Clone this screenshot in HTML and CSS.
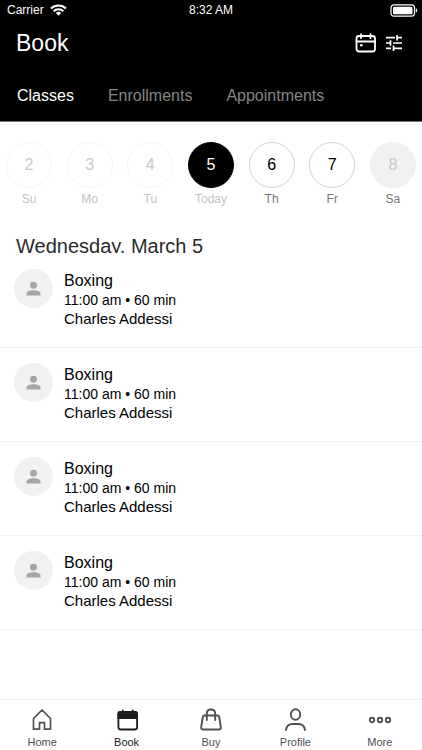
FILE: index.html
```html
<!DOCTYPE html>
<html lang="en">
<head>
<meta charset="utf-8">
<meta name="viewport" content="width=device-width, initial-scale=1">
<title>Book</title>
<link rel="stylesheet" href="styles.css">
</head>
<body>
<header class="header">
  <div class="status">
    <div class="carrier">Carrier
      <svg width="17" height="12" viewBox="0 0 17 12" fill="none" stroke="currentColor" stroke-width="2" aria-hidden="true"><path d="M1 4.500a10.800 10.800 0 0 1 15 0M3.600 7.200a7 7 0 0 1 9.800 0"/><path d="M8.500 11.700 5.900 9.100a3.700 3.700 0 0 1 5.200 0z" fill="currentColor" stroke="none"/></svg>
    </div>
    <div class="clock">8:32 AM</div>
    <div class="battery">
      <svg width="28" height="13" viewBox="0 0 28 13" aria-hidden="true"><rect x="1" y=".8" width="23.500" height="11.400" rx="3" fill="none" stroke="currentColor" stroke-width="1.200"/><rect x="3" y="2.700" width="19.500" height="7.600" rx="1" fill="currentColor"/><path d="M25.800 4.300c2 .7 2 3.700 0 4.400z" fill="currentColor"/></svg>
    </div>
  </div>
  <div class="titlebar">
    <h1>Book</h1>
    <div class="actions">
      <button type="button" aria-label="Calendar">
        <svg width="22" height="20" viewBox="0 0 22 20" fill="none" stroke="currentColor" stroke-width="1.800" stroke-linecap="round"><rect x="1.500" y="3" width="18.500" height="15.500" rx="2.500"/><path d="M1.500 8.500h18.500M6 1.200v4M15.500 1.200v4"/><circle cx="6.300" cy="12.300" r="1.300" fill="currentColor" stroke="none"/></svg>
      </button>
      <button type="button" aria-label="Filters">
        <svg width="18" height="18" viewBox="0 0 18 18" fill="none" stroke="currentColor" stroke-width="1.700"><path d="M1 3.700h9M12 3.700h5M12 1v5.400M1 9h4M8 9h9M5.500 6.300v5.400M1 14.300h5M8.500 14.300h8.500M8.500 11.600v5.400"/></svg>
      </button>
    </div>
  </div>
  <nav class="tabs">
    <a href="#classes" class="current">Classes</a>
    <a href="#enrollments">Enrollments</a>
    <a href="#appointments">Appointments</a>
  </nav>
</header>

<main class="main">
  <div class="week">
    <button type="button" class="day past"><span class="date">2</span><span class="name">Su</span></button>
    <button type="button" class="day past"><span class="date">3</span><span class="name">Mo</span></button>
    <button type="button" class="day past"><span class="date">4</span><span class="name">Tu</span></button>
    <button type="button" class="day today"><span class="date">5</span><span class="name">Today</span></button>
    <button type="button" class="day"><span class="date">6</span><span class="name">Th</span></button>
    <button type="button" class="day"><span class="date">7</span><span class="name">Fr</span></button>
    <button type="button" class="day closed"><span class="date">8</span><span class="name">Sa</span></button>
  </div>
  <h2>Wednesday, March 5</h2>
  <ul class="classes">
    <li>
      <span class="avatar"><svg width="15" height="15" viewBox="0 0 16 16" fill="currentColor" aria-hidden="true"><circle cx="8" cy="4.500" r="3.700"/><path d="M.5 15.500v-2c0-2.500 4-3.700 7.500-3.700s7.500 1.200 7.500 3.700v2z"/></svg></span>
      <div class="info"><h3>Boxing</h3><p class="time">11:00 am • 60 min</p><p class="teacher">Charles Addessi</p></div>
    </li>
    <li>
      <span class="avatar"><svg width="15" height="15" viewBox="0 0 16 16" fill="currentColor" aria-hidden="true"><circle cx="8" cy="4.500" r="3.700"/><path d="M.5 15.500v-2c0-2.500 4-3.700 7.500-3.700s7.500 1.200 7.500 3.700v2z"/></svg></span>
      <div class="info"><h3>Boxing</h3><p class="time">11:00 am • 60 min</p><p class="teacher">Charles Addessi</p></div>
    </li>
    <li>
      <span class="avatar"><svg width="15" height="15" viewBox="0 0 16 16" fill="currentColor" aria-hidden="true"><circle cx="8" cy="4.500" r="3.700"/><path d="M.5 15.500v-2c0-2.500 4-3.700 7.500-3.700s7.500 1.200 7.500 3.700v2z"/></svg></span>
      <div class="info"><h3>Boxing</h3><p class="time">11:00 am • 60 min</p><p class="teacher">Charles Addessi</p></div>
    </li>
    <li>
      <span class="avatar"><svg width="15" height="15" viewBox="0 0 16 16" fill="currentColor" aria-hidden="true"><circle cx="8" cy="4.500" r="3.700"/><path d="M.5 15.500v-2c0-2.500 4-3.700 7.500-3.700s7.500 1.200 7.500 3.700v2z"/></svg></span>
      <div class="info"><h3>Boxing</h3><p class="time">11:00 am • 60 min</p><p class="teacher">Charles Addessi</p></div>
    </li>
  </ul>
</main>

<nav class="bottom">
  <a href="#home">
    <svg width="24" height="24" viewBox="0 0 24 24" fill="none" stroke="currentColor" stroke-width="1.700" stroke-linejoin="round" aria-hidden="true"><path d="M3.500 10.500 12 2l8.500 8.500v10.700h-6v-6.500h-5v6.500h-6z"/></svg>
    <span>Home</span>
  </a>
  <a href="#book" class="current">
    <svg width="24" height="24" viewBox="0 0 24 24" fill="none" stroke="currentColor" stroke-width="1.800" stroke-linecap="round" aria-hidden="true"><rect x="3.400" y="3.800" width="18.700" height="17.700" rx="2.500"/><path d="M3.400 10V5.500q0-1.700 2-1.700h14.700q2 0 2 1.700V10z" fill="currentColor"/><path d="M7.800 2.300v3M17.700 2.300v3"/></svg>
    <span>Book</span>
  </a>
  <a href="#buy">
    <svg width="24" height="24" viewBox="0 0 24 24" fill="none" stroke="currentColor" stroke-width="1.900" stroke-linecap="round" stroke-linejoin="round" aria-hidden="true"><path d="M5.500 7.500h13q1.500 0 1.700 1.500l1.600 10q.3 2.500-2 2.500H4.200q-2.300 0-2-2.500l1.600-10q.2-1.500 1.700-1.500z"/><path d="M7.800 12V5.700q0-4.200 4.200-4.200t4.200 4.200V12"/></svg>
    <span>Buy</span>
  </a>
  <a href="#profile">
    <svg width="24" height="24" viewBox="0 0 24 24" fill="none" stroke="currentColor" stroke-width="1.900" stroke-linecap="round" aria-hidden="true"><ellipse cx="12.500" cy="6.500" rx="4.700" ry="5.200"/><path d="M3 22q.8-6 6.500-6h6q5.700 0 6.500 6"/></svg>
    <span>Profile</span>
  </a>
  <a href="#more">
    <svg width="24" height="24" viewBox="0 0 24 24" fill="none" stroke="currentColor" stroke-width="1.900" aria-hidden="true"><circle cx="4" cy="12" r="2.200"/><circle cx="12" cy="12" r="2.200"/><circle cx="20" cy="12" r="2.200"/></svg>
    <span>More</span>
  </a>
</nav>
</body>
</html>
```
FILE: styles.css
```css
* {
  box-sizing: border-box;
}

body {
  margin: 0;
  min-height: 100vh;
  display: flex;
  flex-direction: column;
  background: #fff;
  color: #000;
  font-family: "Liberation Sans", Arial, sans-serif;
}

h1, h2, h3, p, ul {
  margin: 0;
  padding: 0;
  font-weight: 400;
}

button {
  padding: 0;
  border: 0;
  background: none;
  color: inherit;
  font: inherit;
}

a {
  color: inherit;
  text-decoration: none;
}

svg {
  display: block;
}

.header {
  background: #000;
  color: #fff;
  border-bottom: 1px solid #777;
}

.status {
  display: grid;
  grid-template-columns: 1fr auto 1fr;
  align-items: center;
  height: 20px;
  padding: 0 4px;
  font-size: 12px;
}

.carrier {
  display: flex;
  align-items: center;
  gap: 6px;
  padding-left: 3px;
}

.battery {
  justify-self: end;
}

.titlebar {
  display: flex;
  align-items: center;
  justify-content: space-between;
  height: 46px;
  padding: 0 19px 0 16px;
}

h1 {
  font-size: 23px;
  line-height: 24px;
}

.actions {
  display: flex;
  align-items: center;
  gap: 8px;
}

.tabs {
  display: flex;
  gap: 34px;
  height: 55px;
  padding: 0 17px;
  font-size: 16px;
  line-height: 60px;
  color: #858585;
}

.tabs .current {
  color: #fff;
}

.main {
  flex: 1;
}

.week {
  display: flex;
  justify-content: space-between;
  padding: 20px 6px 0;
}

.day {
  display: flex;
  flex-direction: column;
  align-items: center;
  gap: 2px;
  width: 46px;
  color: #000;
}

.date {
  width: 46px;
  height: 46px;
  border: 1px solid #d4d4d4;
  border-radius: 50%;
  font-size: 16px;
  line-height: 44px;
}

.name {
  font-size: 12px;
  line-height: 18px;
  color: #777;
}

.past .date {
  border-color: #f5f5f5;
  color: #c8c8c8;
}

.past .name,
.today .name {
  color: #c4c4c4;
}

.today .date {
  border-color: #000;
  background: #000;
  color: #fff;
}

.closed .date {
  border-color: #f1f1f1;
  background: #f1f1f1;
  color: #c8c8c8;
}

/* The heading box ends just below the baseline, so descenders are cut. */
h2 {
  height: 19px;
  margin: 26px 0 1px;
  padding: 0 16px;
  overflow: hidden;
  font-size: 20px;
  line-height: 24px;
  color: #2b2b2b;
}

.classes {
  list-style: none;
}

.classes li {
  display: flex;
  gap: 11px;
  padding: 15px 14px 19px;
  border-bottom: 1px solid #f1f1f1;
}

.avatar {
  display: grid;
  place-items: center;
  width: 39px;
  height: 39px;
  border-radius: 50%;
  background: #f1f1f1;
  color: #a5a5a5;
}

.info {
  padding-top: 2px;
}

h3 {
  font-size: 16px;
  line-height: 20px;
}

.time {
  font-size: 14px;
  line-height: 19px;
}

.teacher {
  font-size: 15px;
  line-height: 18px;
}

.bottom {
  display: grid;
  grid-template-columns: repeat(5, 1fr);
  height: 51px;
  border-top: 1px solid #f1f1f1;
  color: #505056;
  font-size: 11px;
}

.bottom a {
  display: flex;
  flex-direction: column;
  align-items: center;
  gap: 4px;
  padding-top: 8px;
}

.bottom .current {
  color: #1c1c1e;
}
```
